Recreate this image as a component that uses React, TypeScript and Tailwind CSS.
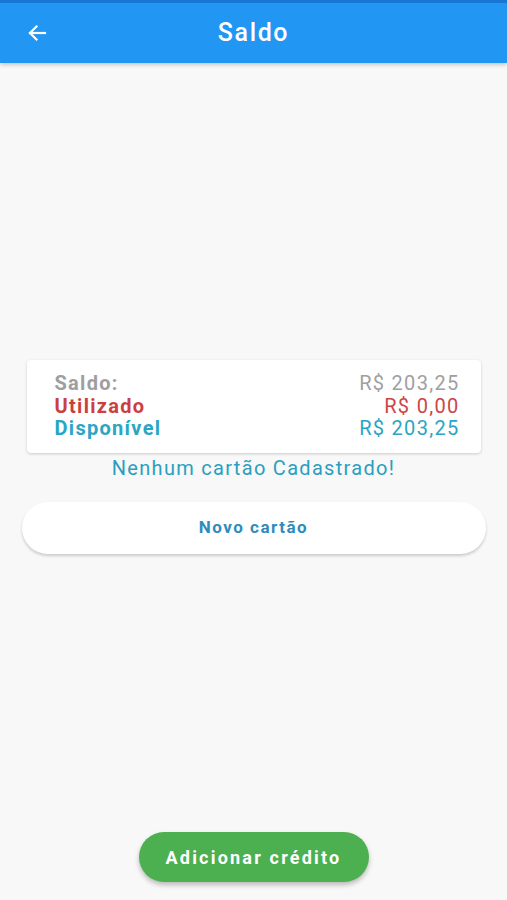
import React from "react";

export default function App() {
  return (
    <div
      className="w-[507px] h-[900px] flex flex-col bg-[#f8f8f8] overflow-hidden"
      style={{ fontFamily: "Roboto, 'Noto Sans', sans-serif" }}
    >
      <header className="h-[63px] shrink-0 bg-[#2196f3] border-t-[3px] border-[#1976d2] shadow-[0_2px_4px_rgba(0,0,0,0.2)] grid grid-cols-[74px_1fr_74px] items-center relative z-10">
        <div className="flex items-center justify-center">
          <svg width="24" height="24" viewBox="0 0 24 24" fill="none" stroke="white" strokeWidth="2.2" strokeLinecap="square">
            <path d="M20 12H5" />
            <path d="M11.5 5.5L5 12l6.5 6.5" />
          </svg>
        </div>
        <div className="text-center text-white text-[25px] font-medium tracking-[1.6px]">Saldo</div>
        <div />
      </header>

      <main className="flex-1 flex flex-col items-center pt-[297px]">
        <div className="w-[454px] bg-white rounded-[4px] shadow-[0_1px_3px_rgba(0,0,0,0.18)] pl-[28px] pr-[21px] pt-[12px] pb-[13px] text-[20px] leading-[22.5px] tracking-[1.3px]">
          <div className="flex justify-between">
            <span className="font-bold text-[#9e9e9e]">Saldo:</span>
            <span className="text-[#a0a0a0]">R$ 203,25</span>
          </div>
          <div className="flex justify-between">
            <span className="font-bold text-[#cc3f3f]">Utilizado</span>
            <span className="text-[#cc4545]">R$ 0,00</span>
          </div>
          <div className="flex justify-between">
            <span className="font-bold text-[#2aa5c4]">Disponível</span>
            <span className="text-[#2aa5c4]">R$ 203,25</span>
          </div>
        </div>
        <div className="mt-[3px] text-[20px] leading-[24px] text-[#2a9fbf] tracking-[1.3px]">
          Nenhum cartão Cadastrado!
        </div>
        <button className="mt-[22px] w-[464px] h-[52px] rounded-full bg-white shadow-[0_2px_3px_rgba(0,0,0,0.18)] text-[17px] font-bold text-[#2e8cbc] tracking-[1.5px]">
          Novo cartão
        </button>
        <div className="flex-1" />
        <button className="mb-[18px] w-[230px] h-[50px] rounded-full bg-[#4caf50] shadow-[0_3px_5px_rgba(0,0,0,0.25)] text-white text-[18px] font-bold tracking-[2.2px]">
          Adicionar crédito
        </button>
      </main>
    </div>
  );
}
